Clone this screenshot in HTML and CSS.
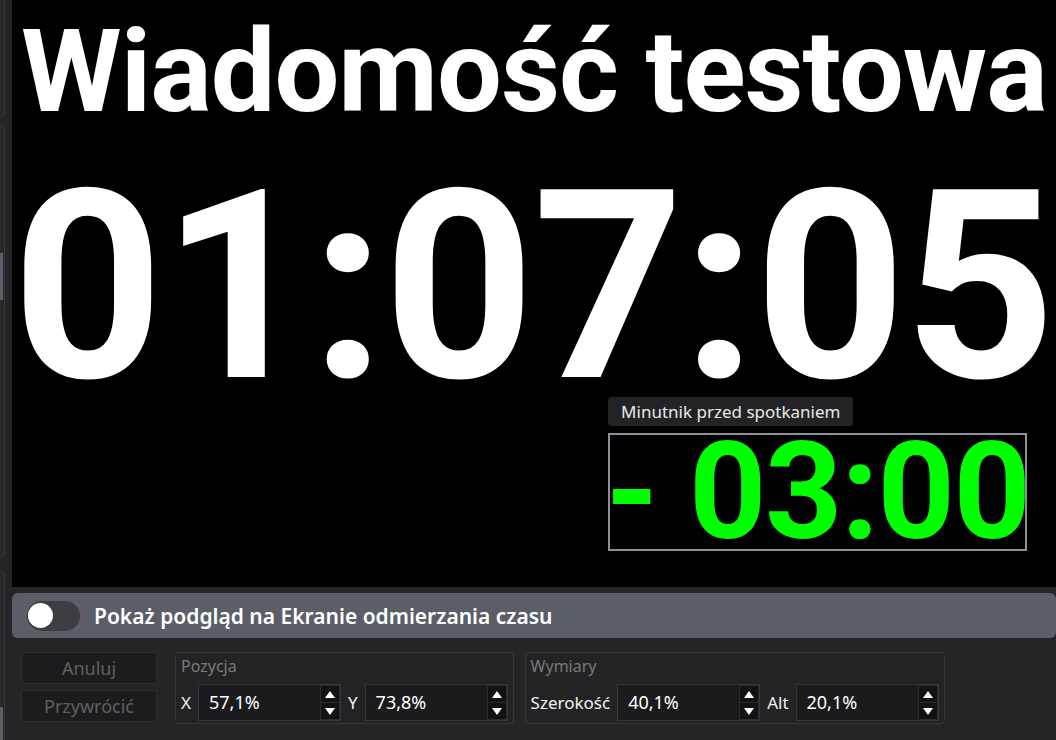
FILE: index.html
```html
<!DOCTYPE html>
<html lang="pl">
<head>
<meta charset="utf-8">
<title>Podgląd ekranu</title>
<link rel="stylesheet" href="styles.css">
</head>
<body>
<div class="app">
  <aside class="sidebar">
    <div class="side-card side-card-1"></div>
    <div class="side-card side-card-2"><div class="side-thumb thumb-2"></div></div>
    <div class="side-card side-card-3"><div class="side-thumb thumb-3"></div></div>
  </aside>
  <main class="main">
    <section class="preview">
      <h1 class="title">Wiadomość testowa</h1>
      <div class="clock">01:07:05</div>
      <div class="overlay" style="left:57.1%;top:73.8%;width:40.1%;height:20.1%">
        <div class="overlay-label">Minutnik przed spotkaniem</div>
        <div class="overlay-box">- 03:00</div>
      </div>
    </section>
    <section class="panel">
      <div class="toggle-bar">
        <span class="switch"><span class="knob"></span></span>
        <span class="toggle-text">Pokaż podgląd na Ekranie odmierzania czasu</span>
      </div>
      <div class="controls">
        <div class="buttons">
          <button class="btn">Anuluj</button>
          <button class="btn">Przywrócić</button>
        </div>
        <div class="group">
          <div class="group-label">Pozycja</div>
          <div class="row">
            <span class="field-label">X</span>
            <div class="input">
              <span class="value">57,1%</span>
              <span class="spin">
                <span class="spin-btn"><svg width="10" height="7" viewBox="0 0 10 7"><polygon points="5,0 10,7 0,7" fill="#fff"/></svg></span>
                <span class="spin-btn"><svg width="10" height="7" viewBox="0 0 10 7"><polygon points="0,0 10,0 5,7" fill="#fff"/></svg></span>
              </span>
            </div>
            <span class="field-label">Y</span>
            <div class="input">
              <span class="value">73,8%</span>
              <span class="spin">
                <span class="spin-btn"><svg width="10" height="7" viewBox="0 0 10 7"><polygon points="5,0 10,7 0,7" fill="#fff"/></svg></span>
                <span class="spin-btn"><svg width="10" height="7" viewBox="0 0 10 7"><polygon points="0,0 10,0 5,7" fill="#fff"/></svg></span>
              </span>
            </div>
          </div>
        </div>
        <div class="group">
          <div class="group-label">Wymiary</div>
          <div class="row">
            <span class="field-label">Szerokość</span>
            <div class="input">
              <span class="value">40,1%</span>
              <span class="spin">
                <span class="spin-btn"><svg width="10" height="7" viewBox="0 0 10 7"><polygon points="5,0 10,7 0,7" fill="#fff"/></svg></span>
                <span class="spin-btn"><svg width="10" height="7" viewBox="0 0 10 7"><polygon points="0,0 10,0 5,7" fill="#fff"/></svg></span>
              </span>
            </div>
            <span class="field-label">Alt</span>
            <div class="input">
              <span class="value">20,1%</span>
              <span class="spin">
                <span class="spin-btn"><svg width="10" height="7" viewBox="0 0 10 7"><polygon points="5,0 10,7 0,7" fill="#fff"/></svg></span>
                <span class="spin-btn"><svg width="10" height="7" viewBox="0 0 10 7"><polygon points="0,0 10,0 5,7" fill="#fff"/></svg></span>
              </span>
            </div>
          </div>
        </div>
      </div>
    </section>
  </main>
</div>
</body>
</html>
```

FILE: styles.css
```css
html, body {
  margin: 0;
  padding: 0;
}

body {
  background: #252527;
  font-family: "Noto Sans", "Open Sans", sans-serif;
  overflow: hidden;
}

.app {
  display: flex;
  width: 1056px;
  height: 740px;
}

/* left, clipped side panels */
.sidebar {
  width: 12px;
  flex: none;
  display: flex;
  flex-direction: column;
}

.side-card {
  width: 4px;
  flex: none;
  background: #29292b;
  border: 1px solid #38383b;
  border-left: none;
  border-radius: 0 6px 6px 0;
}

.side-card-1 {
  height: 116px;
  border-top: none;
  border-top-right-radius: 0;
}

.side-card-2 {
  margin-top: 8px;
  height: 431px;
}

.side-card-3 {
  margin-top: 13px;
  flex: 1;
  border-bottom: none;
  border-bottom-right-radius: 0;
}

.side-thumb {
  width: 3px;
  background: #5b5e67;
}

.thumb-2 {
  margin-top: 127px;
  height: 47px;
}

.thumb-3 {
  margin-top: 135px;
  height: 40px;
}

/* main column */
.main {
  flex: 1;
  min-width: 0;
  display: flex;
  flex-direction: column;
}

.preview {
  flex: none;
  height: 587px;
  background: #000;
  position: relative;
  overflow: hidden;
}

.title {
  margin: 0;
  padding-top: 14px;
  font-family: Roboto, sans-serif;
  font-weight: 700;
  font-size: 115px;
  line-height: 116px;
  letter-spacing: -1px;
  color: #fff;
  text-align: center;
  white-space: nowrap;
}

.clock {
  margin-top: 57px;
  padding-right: 8px;
  font-family: Roboto, sans-serif;
  font-weight: 700;
  font-size: 264px;
  line-height: 200px;
  letter-spacing: -2px;
  color: #fff;
  text-align: center;
  white-space: nowrap;
}

.overlay {
  position: absolute;
}

.overlay-label {
  position: absolute;
  left: 0;
  bottom: calc(100% + 7px);
  height: 29px;
  padding: 0 13px;
  background: #232326;
  border-radius: 3px;
  color: #e8e8e8;
  font-size: 17px;
  line-height: 29px;
  white-space: nowrap;
}

.overlay-box {
  box-sizing: border-box;
  height: 100%;
  border: 2px solid #8a8f99;
  display: flex;
  align-items: center;
  justify-content: center;
  color: #00ff00;
  font-family: Roboto, sans-serif;
  font-weight: 700;
  font-size: 135px;
  line-height: 100px;
  letter-spacing: -1.5px;
  white-space: nowrap;
}

/* bottom panel */
.panel {
  flex: 1;
  background: #252527;
  padding-top: 6px;
}

.toggle-bar {
  height: 45px;
  background: #5b5e67;
  border-radius: 6px;
  display: flex;
  align-items: center;
  padding-left: 15px;
  gap: 14px;
}

.switch {
  box-sizing: border-box;
  width: 53px;
  height: 30px;
  border-radius: 15px;
  background: #3d3e43;
  display: flex;
  align-items: center;
  padding-left: 1px;
}

.knob {
  width: 25px;
  height: 25px;
  border-radius: 50%;
  background: #fff;
}

.toggle-text {
  color: #fff;
  font-weight: 600;
  font-size: 21px;
}

.controls {
  display: flex;
  align-items: flex-start;
  padding: 14px 0 0 9px;
}

.buttons {
  width: 136px;
  margin-right: 18px;
  display: flex;
  flex-direction: column;
  gap: 6px;
}

.btn {
  box-sizing: border-box;
  height: 32px;
  padding: 0;
  background: #1c1c1e;
  border: 1px solid #2f2f31;
  border-radius: 3px;
  color: #606060;
  font-family: "Noto Sans", "Open Sans", sans-serif;
  font-size: 18px;
  line-height: 28px;
}

.group {
  box-sizing: border-box;
  height: 72px;
  margin-right: 11px;
  padding: 0 5px;
  background: #232325;
  border: 1px solid #38383b;
  border-radius: 4px;
}

.group-label {
  font-size: 16px;
  line-height: 26px;
  color: #7a7a7a;
}

.row {
  display: flex;
  align-items: center;
  margin-top: 5px;
}

.field-label {
  color: #f2f2f2;
  font-size: 17px;
  margin-right: 7px;
}

.input {
  box-sizing: border-box;
  width: 143px;
  height: 37px;
  margin-right: 7px;
  display: flex;
  background: #1b1b1d;
  border: 1px solid #36363a;
}

.row .input:last-child {
  margin-right: 0;
}

.value {
  flex: 1;
  padding-left: 10px;
  color: #fff;
  font-size: 18px;
  line-height: 35px;
}

.spin {
  width: 20px;
  display: flex;
  flex-direction: column;
}

.spin-btn {
  flex: 1;
  display: flex;
  align-items: center;
  justify-content: center;
  background: #121213;
  border: 1px solid #2c2c2e;
}

.spin-btn + .spin-btn {
  border-top: none;
}
```
